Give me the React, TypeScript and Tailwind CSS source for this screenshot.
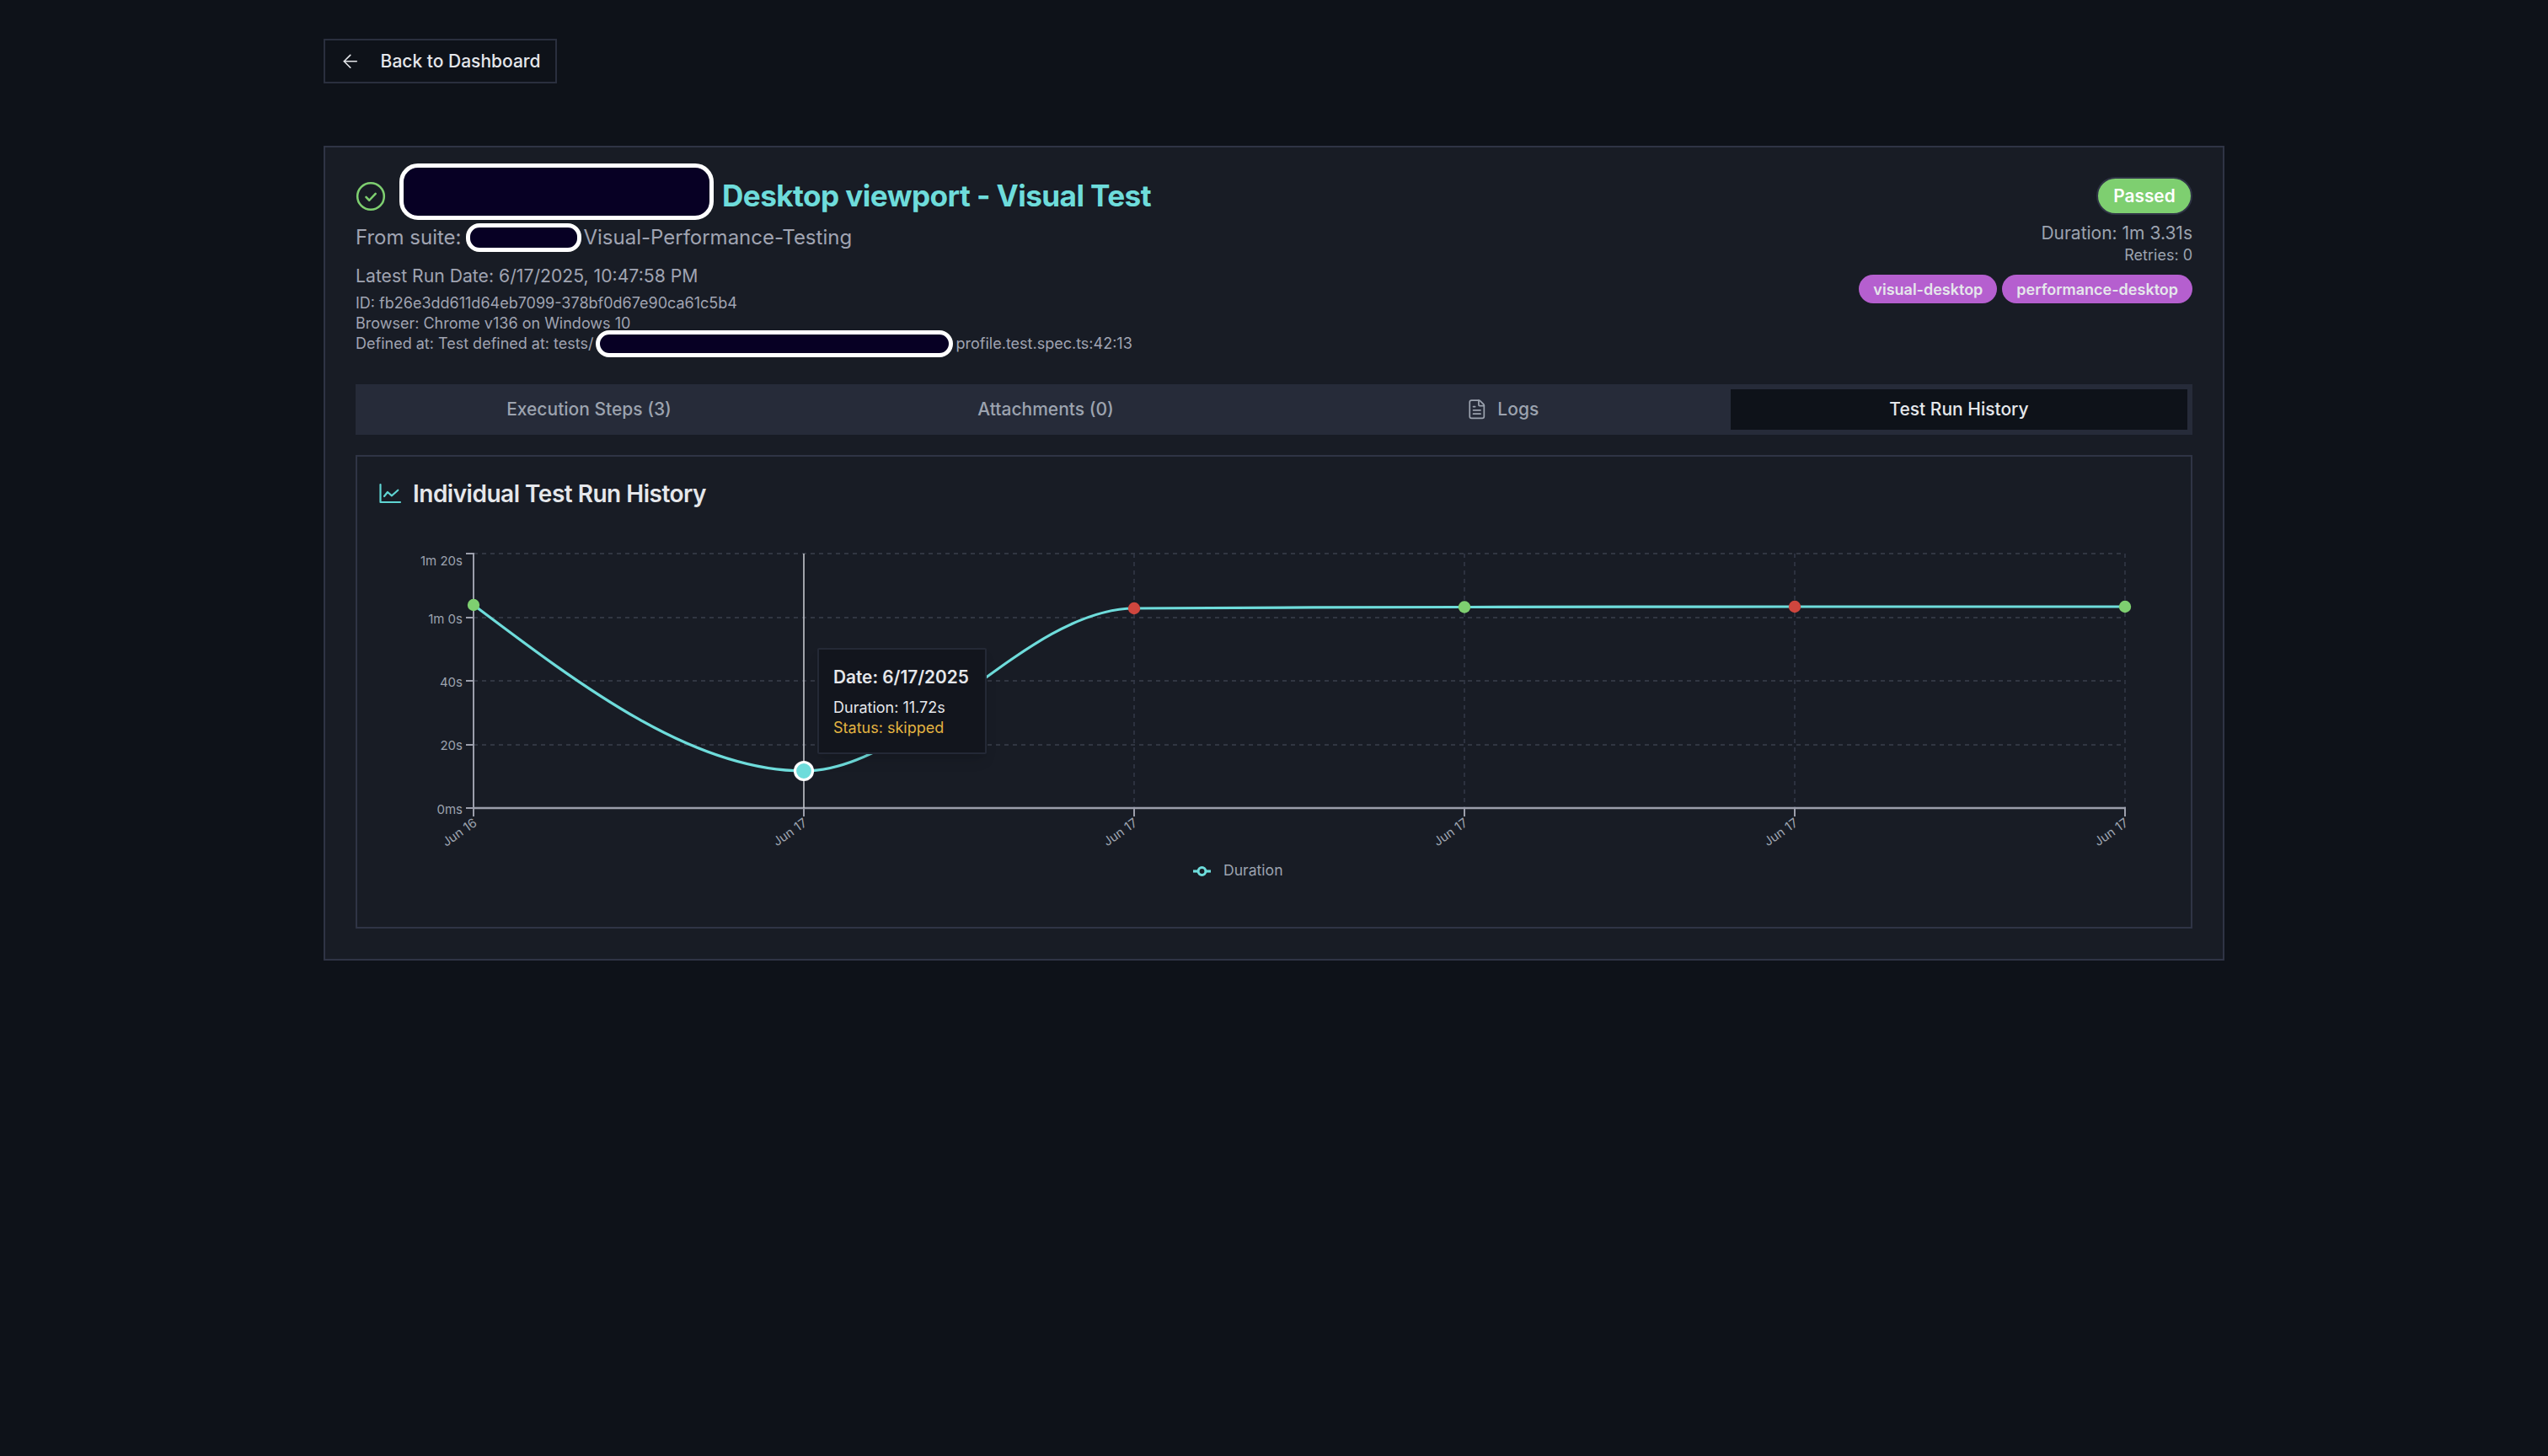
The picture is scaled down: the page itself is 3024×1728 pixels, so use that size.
import { ArrowLeft, FileText } from "lucide-react";

const TEAL = "#6edcdb";
const GREEN = "#7ecf70";
const RED = "#cf463e";

const gridX = [1346, 1738, 2130, 2522];
const gridY = [657, 733, 808, 884];
const tickX = [562, 954, 1346, 1738, 2130, 2522];
const yTicks = [
  { label: "1m 20s", tick: 657, text: 671 },
  { label: "1m 0s", tick: 733, text: 740 },
  { label: "40s", tick: 808, text: 815 },
  { label: "20s", tick: 884, text: 890 },
  { label: "0ms", tick: 959, text: 966 },
];
const dots = [
  { x: 562, y: 718, color: GREEN },
  { x: 1346, y: 722, color: RED },
  { x: 1738, y: 720.5, color: GREEN },
  { x: 2130, y: 720, color: RED },
  { x: 2522, y: 720, color: GREEN },
];
const linePath =
  "M562 718C692.67 816.5 823.33 915 954 915C1084.67 915 1215.33 723 1346 722C1476.67 721 1607.33 720.83 1738 720.5C1868.67 720.17 1999.33 720 2130 720L2522 720";

function Redacted({ className }: { className: string }) {
  return (
    <span className={`inline-block shrink-0 border-[5px] border-white bg-[#070024] ${className}`} />
  );
}

function HistoryChart() {
  return (
    <div className="relative">
      <svg className="block h-[490px] w-[2176px]" viewBox="424 610 2176 490">
        <g fill="none" stroke="#3a3f4c" strokeDasharray="5 5" strokeWidth="1.6">
          {gridY.map((y) => (
            <line key={y} x1="562" x2="2522" y1={y} y2={y} />
          ))}
        </g>
        <g fill="none" stroke="#333846" strokeDasharray="5 5" strokeWidth="1.6">
          {gridX.map((x) => (
            <line key={x} x1={x} x2={x} y1="657" y2="959" />
          ))}
        </g>
        <g stroke="#9b9eab" strokeWidth="2">
          <line x1="562" x2="562" y1="656" y2="960" />
          <line x1="561" x2="2523" y1="959" y2="959" strokeWidth="2.4" />
          {yTicks.map((t) => (
            <line key={t.label} x1="553" x2="562" y1={t.tick} y2={t.tick} />
          ))}
          {tickX.map((x) => (
            <line key={x} x1={x} x2={x} y1="959" y2="969" />
          ))}
        </g>
        <g fill="#9ca3af" fontSize="15">
          {yTicks.map((t) => (
            <text key={t.label} textAnchor="end" x="549" y={t.text}>
              {t.label}
            </text>
          ))}
          {tickX.map((x, i) => (
            <text
              key={x}
              textAnchor="end"
              transform={`rotate(-35 ${x + 5} 979)`}
              x={x + 5}
              y="979"
            >
              {i === 0 ? "Jun 16" : "Jun 17"}
            </text>
          ))}
        </g>
        <line stroke="#c4c6cc" strokeWidth="1.6" x1="954" x2="954" y1="657" y2="959" />
        <path d={linePath} fill="none" stroke={TEAL} strokeWidth="3.2" />
        {dots.map((d) => (
          <circle cx={d.x} cy={d.y} fill={d.color} key={d.x} r="7.2" />
        ))}
        <circle cx="954" cy="915" fill={TEAL} r="10.5" stroke="#fff" strokeWidth="3.2" />
        <line stroke={TEAL} strokeWidth="3.2" x1="1416" x2="1437" y1="1034" y2="1034" />
        <circle cx="1426.5" cy="1034" fill="#181c25" r="4.4" stroke={TEAL} strokeWidth="3" />
        <text fill="#9ca3af" fontSize="17.6" x="1452" y="1039">
          Duration
        </text>
      </svg>
      <div className="absolute left-[546px] top-[159px] w-[201px] rounded-[2px] border-2 border-[#242936] bg-[#12151d] pb-[17px] pl-[17px] pt-[17px] shadow-lg">
        <div className="text-[20.8px] font-semibold leading-[32px] text-[#e5e7eb]">Date: 6/17/2025</div>
        <div className="mt-[8px] text-[18px] leading-[24px] text-[#e5e7eb]">Duration: 11.72s</div>
        <div className="text-[18px] leading-[24px] text-[#e3b341]">Status: skipped</div>
      </div>
    </div>
  );
}

export default function App() {
  const tabs = ["Execution Steps (3)", "Attachments (0)", "Logs", "Test Run History"];

  return (
    <div className="min-h-screen bg-[#0e1219] px-[384px] pt-[46px] font-['Inter',sans-serif] text-[#e5e7eb]">
      <button className="flex h-[53px] w-[277px] items-center gap-[23px] border-2 border-[#2a2f3e] pl-[17px] text-[21px] font-medium">
        <ArrowLeft size={25.6} strokeWidth={1.5} />
        <span>Back to Dashboard</span>
      </button>

      <div className="mt-[74px] w-[2256px] border-2 border-[#2f3445] bg-[#181c25] px-[36px] pb-[36px] pt-[35px]">
        <div className="flex justify-between">
          <div>
            <div className="flex h-[45px] items-center">
              <svg className="-ml-px mt-[1px] h-[38px] w-[38px] shrink-0" fill="none" stroke={GREEN} strokeWidth="1.6" viewBox="0 0 24 24">
                <circle cx="12" cy="12" r="10" />
                <path d="M8.5 12.6 10.9 15 15.6 10" strokeLinecap="round" strokeLinejoin="round" />
              </svg>
              <Redacted className="-mb-[6px] -mt-[16px] ml-[15px] h-[67px] w-[373px] rounded-[22px]" />
              <span className="ml-[10px] text-[35.2px] font-bold tracking-[-0.6px] text-[#6edcdb]">
                Desktop viewport - Visual Test
              </span>
            </div>
            <div className="mt-[11px] flex h-[32px] items-center text-[24px] text-[#a0a4b2]">
              <span>From suite:</span>
              <Redacted className="-my-[2px] ml-[6px] mr-[2px] h-[34px] w-[137px] rounded-[16px]" />
              <span>Visual-Performance-Testing</span>
            </div>
            <div className="mt-[15px] text-[21.2px] leading-[28px] text-[#a0a4b2]">
              Latest Run Date: 6/17/2025, 10:47:58 PM
            </div>
            <div className="mt-[7px] text-[18px] leading-[24px] text-[#a0a4b2]">
              <div>ID: fb26e3dd611d64eb7099-378bf0d67e90ca61c5b4</div>
              <div>Browser: Chrome v136 on Windows 10</div>
              <div className="flex h-[24px] items-center">
                <span>Defined at: Test defined at: tests/</span>
                <Redacted className="-my-[4px] ml-[2px] mr-[4px] h-[32px] w-[424px] rounded-[16px]" />
                <span>profile.test.spec.ts:42:13</span>
              </div>
            </div>
          </div>

          <div className="flex flex-col items-end">
            <span className="flex h-[45px] w-[114px] items-center justify-center rounded-full border-2 border-[#2f3445] bg-[#7ecf70] text-[20.8px] font-semibold text-white">
              Passed
            </span>
            <div className="mt-[7px] text-[21px] leading-[30px] text-[#9ca3af]">Duration: 1m 3.31s</div>
            <div className="text-[18px] leading-[22px] text-[#9ca3af]">Retries: 0</div>
            <div className="mt-[12px] flex gap-[6px]">
              {["visual-desktop", "performance-desktop"].map((tag) => (
                <span
                  className="flex h-[34px] items-center rounded-full bg-[#b55fcf] px-[17px] text-[18px] font-semibold text-[#e5e7eb]"
                  key={tag}
                >
                  {tag}
                </span>
              ))}
            </div>
          </div>
        </div>

        <div className="mt-[36px] grid h-[60px] grid-cols-4 bg-[#262b39] p-[6px]">
          {tabs.map((tab) => (
            <div
              className={`flex items-center justify-center gap-[12px] text-[21px] font-medium ${
                tab === "Test Run History" ? "bg-[#0e1219] text-[#e5e7eb]" : "text-[#9ca3af]"
              }`}
              key={tab}
            >
              {tab === "Logs" ? <FileText size={25.6} strokeWidth={1.6} /> : null}
              <span>{tab}</span>
            </div>
          ))}
        </div>

        <div className="mt-[24px] border-2 border-[#2f3445]">
          <div className="flex h-[66px] items-end pl-[25px]">
            <div className="flex h-[45px] items-center gap-[13px]">
              <svg className="h-[28px] w-[28px]" fill="none" stroke="#5fd4d2" strokeLinecap="round" strokeLinejoin="round" strokeWidth="2.2" viewBox="0 0 28 28">
                <path d="M2.5 3V24H26" />
                <path d="M7 17 11 12 16 16.3 23.3 9.7" />
              </svg>
              <span className="text-[28px] font-semibold tracking-[-0.5px]">Individual Test Run History</span>
            </div>
          </div>
          <div className="pt-[2px]">
            <HistoryChart />
          </div>
        </div>
      </div>
    </div>
  );
}
